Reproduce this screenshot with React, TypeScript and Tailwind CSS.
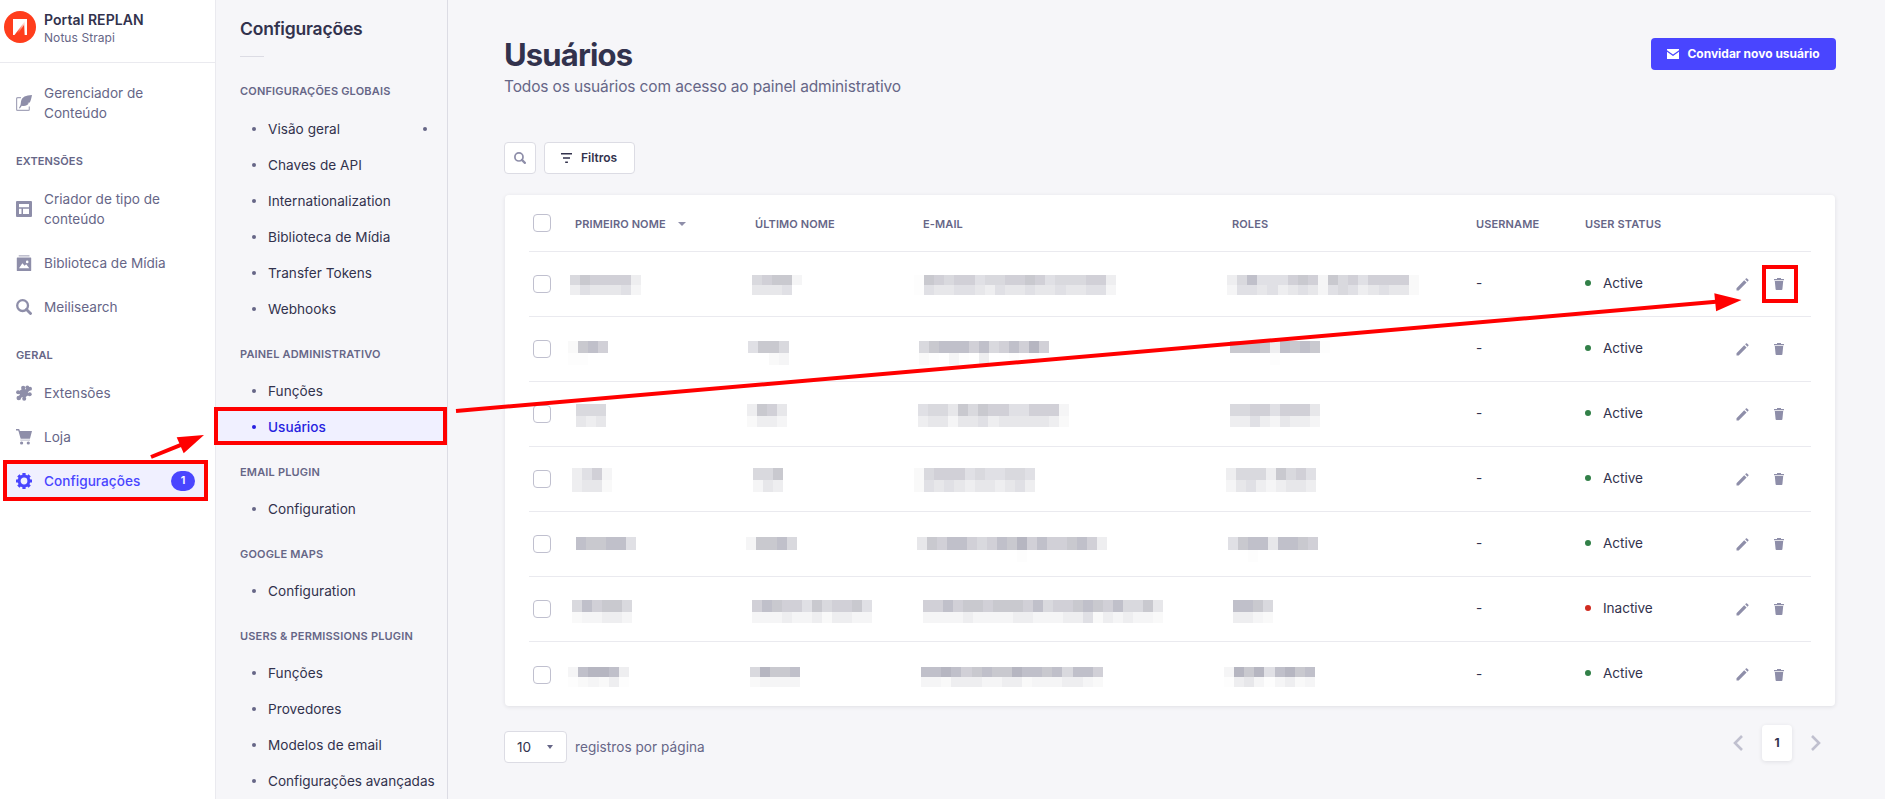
import React from 'react';

const SHADES: Record<string, string> = {
  a: '#b6b6c1', b: '#c0c0ca', c: '#c9c9cf', d: '#d1d0d7', e: '#d9d9de', f: '#e0e0e5',
  g: '#e7e7ea', h: '#eeeef0', i: '#f5f5f6', j: '#f9f9f9', k: '#fdfdfd',
};

type MosaicSpec = { x: number; w: number; y: number; heights: number[]; rows: string[] };

function Mosaic({ x, w, y, heights, rows }: MosaicSpec) {
  const tops = heights.map((_, i) => heights.slice(0, i).reduce((a, b) => a + b, 0));
  const total = heights.reduce((a, b) => a + b, 0);
  const width = Math.ceil(w * rows[0].length);
  return (
    <svg className="absolute" style={{ left: x, top: y }} width={width} height={total} shapeRendering="crispEdges">
      {rows.map((row, r) =>
        row.split('').map((ch, i) =>
          ch === '.' ? null : (
            <rect key={`${r}-${i}`} x={i * w} y={tops[r]} width={w} height={heights[r]} fill={SHADES[ch]} />
          ),
        ),
      )}
    </svg>
  );
}

type Row = { y: number; heights: number[]; cells: [number, number, string[]][]; status: string };

// Each cell: horizontal offset inside its column, block width, shade rows.
const ROWS: Row[] = [
  { y: 23, heights: [10, 10], status: 'Active', cells: [
    [-5, 10.15, ['ecddddh', 'hfgggfi']],
    [-3, 10, ['edcci', 'gggf.']],
    [-9, 10.1, ['kcdeddfeeddcdfeeeddh', 'kfggffghfggfggfggffi']],
    [-5, 10.1, ['hebfffdcdicedfddddj', 'iffgfhgfgifefhgfggj']] ] },
  { y: 24, heights: [12, 12], status: 'Active', cells: [
    [-7, 10, ['jcbd', 'kk..']],
    [-7, 10.25, ['fcce', '..ji']],
    [-4, 10, ['ecbbbdbedbdad', 'jk.ik.h..k.k.']],
    [-2, 10, ['ccbchbcbck', '....k.....']] ] },
  { y: 22, heights: [12, 11], status: 'Active', cells: [
    [1, 10, ['eee', 'ghg']],
    [-8, 10, ['hcdg', 'jhhi']],
    [-5, 10.07, ['feegcecddffdddi', 'hggiggfhggggghj']],
    [-2, 10, ['eeddfdddg', 'hhfhighhi']] ] },
  { y: 21, heights: [12, 12], status: 'Active', cells: [
    [-3, 10, ['hfdi', 'hggj']],
    [-2, 10, ['eec', 'igh']],
    [-9, 10.1, ['jedddfeffeef', 'jfgfghgghgfh']],
    [-6, 10, ['heeehcedf', 'igfhihggh']] ] },
  { y: 25, heights: [13, 12], status: 'Active', cells: [
    [1, 10, ['bccbbf', '......']],
    [-9, 10.2, ['iccbe', '.....']],
    [-6, 10, ['gcdbbdedbcadbddcbdh', '..........k........']],
    [-4, 10, ['fcbbgbbcd', '..k......']] ] },
  { y: 23, heights: [12, 11], status: 'Inactive', cells: [
    [-3, 10, ['ebdcce', 'jiihhi']],
    [-3, 10, ['dbcddfceddcf', 'iiihiihjhhii']],
    [0, 10, ['ddbdccdcccdbeddcbcdbeecg', 'iiiihiiiihhiiihhfjhihiij']],
    [1, 10, ['bbce', 'hhij']] ] },
  { y: 25, heights: [10, 10], status: 'Active', cells: [
    [-7, 10.17, ['ibaabh', 'kjijhk']],
    [-5, 10, ['eaccb', 'jiiii']],
    [-2, 10.1, ['bbabdcbccabbcbebbd', 'iijhhhiihhjiiihhij']],
    [-8, 10.12, ['iacafbacb', 'khgikihji']] ] },
];

const ContentIcon = () => (
  <svg width="16" height="16" viewBox="0 0 16 16" fill="none">
    <path d="M5 2.700H1.600a1 1 0 0 0-1 1v10.700a1 1 0 0 0 1 1h10.700a1 1 0 0 0 1-1v-3" stroke="#a5a5ba" strokeWidth="1.200" />
    <path d="M16 0C10 .300 5.800 1.600 5 6.600c-.2 1.500-.3 2.600-.5 3.400L3 13l.8.5 2-2.800c3 .5 5.500 0 7-2.200l-1.400-.4 2.400-.5c1-2 1.600-4.500 2.200-7.600Z" fill="#8e8ea9" />
  </svg>
);
const LayoutIcon = () => (
  <svg width="16" height="16" viewBox="0 0 16 16">
    <path fillRule="evenodd" d="M1 0h14a1 1 0 0 1 1 1v14a1 1 0 0 1-1 1H1a1 1 0 0 1-1-1V1a1 1 0 0 1 1-1Zm2 3v3.200h10V3H3Zm0 4.800V13h2.500V7.800H3Zm4 0V13h6V7.800H7Z" fill="#8e8ea9" />
  </svg>
);
const MediaIcon = () => (
  <svg width="16" height="16" viewBox="0 0 16 16">
    <path d="M2.700 0h10.800v1.600H2.700z" fill="#c0c0cf" />
    <path fillRule="evenodd" d="M1.400 2.400h13.200c.3 0 .6.300.6.600v12.400c0 .3-.3.600-.6.600H1.400a.6.600 0 0 1-.6-.6V3c0-.3.3-.6.6-.6ZM3 13.200h10.300L10.200 9.200l-1.600 1.600-2.200-2.600L3 13.200ZM11.200 5.600a1.300 1.300 0 1 0 0 2.600 1.300 1.300 0 0 0 0-2.600Z" fill="#8e8ea9" />
  </svg>
);
const SearchIcon = ({ size = 16 }: { size?: number }) => (
  <svg width={size} height={size} viewBox="0 0 16 16" fill="none" stroke="#8e8ea9">
    <circle cx="6.600" cy="6.600" r="5.400" strokeWidth="2.300" />
    <path d="m10.500 10.500 4 4" strokeWidth="2.900" strokeLinecap="round" />
  </svg>
);
const PuzzleIcon = () => (
  <svg width="16" height="16" viewBox="0 0 16 16" fill="#8e8ea9">
    <path d="M4 5.500 7 4l2.500 1 2-3 3.500 2.500L11.500 7.500l2.500 2-4 2-1.500 3L6.500 12 4 13.500 2 12l2-2.500-2-2Z" />
    <circle cx="7.200" cy="2.900" r="2.100" />
    <circle cx="11.300" cy="2.300" r="1.900" />
    <circle cx="14.100" cy="3.700" r="1.900" />
    <circle cx="13.700" cy="9.200" r="2" />
    <circle cx="2.100" cy="7.200" r="2" />
    <circle cx="2.800" cy="13" r="2.300" />
    <circle cx="8.200" cy="13.800" r="2" />
    <circle cx="7.800" cy="8" r="4" />
  </svg>
);
const CartIcon = () => (
  <svg width="16" height="16" viewBox="0 0 16 16" fill="#8e8ea9">
    <path d="M0 0h2.700c.4 0 .7.300.8.700L3.900 2H16l-1.900 7.200c-.1.400-.4.600-.8.600H5.300c-.4 0-.7-.3-.8-.6L2.300 1.400H0Z" />
    <path d="M4.300 10.600h9.700v1H4.300z" opacity=".6" />
    <circle cx="5.600" cy="14" r="1.600" />
    <circle cx="12.300" cy="14" r="1.600" />
  </svg>
);
const GearIcon = () => (
  <svg width="16" height="16" viewBox="0 0 16 16" fill="none" stroke="#4945ff">
    <circle cx="8" cy="8" r="4.900" strokeWidth="3" />
    <g strokeWidth="3.200">
      {[0, 45, 90, 135].map((a) => (
        <path key={a} d="M8 0v2.500M8 13.500V16" transform={`rotate(${a} 8 8)`} />
      ))}
    </g>
  </svg>
);

const LABEL = 'text-[11px] font-semibold uppercase leading-4 text-[#666687]';

function NavItem({ icon, children, tall }: { icon: React.ReactNode; children: React.ReactNode; tall?: boolean }) {
  return (
    <a className={`flex items-center gap-3 pl-4 text-[#666687] ${tall ? 'h-16' : 'h-11'}`}>
      <span className="flex w-4 shrink-0 justify-center">{icon}</span>
      <span className="w-[130px] text-[13.6px] leading-5">{children}</span>
    </a>
  );
}

function NavLabel({ children }: { children: string }) {
  return <div className={`flex h-[42px] items-center pl-4 pt-[9px] tracking-[0.12px] ${LABEL}`}>{children}</div>;
}

const SECTIONS: { title: string; items: string[] }[] = [
  { title: 'Configurações globais', items: ['Visão geral', 'Chaves de API', 'Internationalization', 'Biblioteca de Mídia', 'Transfer Tokens', 'Webhooks'] },
  { title: 'Painel administrativo', items: ['Funções', 'Usuários'] },
  { title: 'Email plugin', items: ['Configuration'] },
  { title: 'Google Maps', items: ['Configuration'] },
  { title: 'Users & Permissions plugin', items: ['Funções', 'Provedores', 'Modelos de email', 'Configurações avançadas'] },
];

function SubNav() {
  return (
    <aside className="h-full w-[232px] shrink-0 border-r border-[#dcdce4]">
      <div className="pl-6 pt-4">
        <h2 className="text-[17.5px] font-semibold leading-[26px] tracking-[-0.2px]">Configurações</h2>
        <div className="mt-[14px] h-px w-6 bg-[#dcdce4]" />
      </div>
      <div className="-mt-px">
        {SECTIONS.map((s, si) => (
          <section key={s.title}>
            <h3 className={`flex items-center pl-6 ${si === 0 ? 'h-[55px] pt-[15px]' : 'h-[46px] pt-[7px]'} tracking-[0.18px] ${LABEL}`}>{s.title}</h3>
            {s.items.map((item) => {
              const active = item === 'Usuários';
              const long = item === 'Configurações avançadas';
              return (
                <a key={item} className={`flex h-9 items-center pl-9 ${active ? 'relative bg-[#f0f0ff] text-[#271fe0]' : ''}`}>
                  <span className={`size-1 shrink-0 rounded-full ${active ? 'bg-[#271fe0]' : 'bg-[#666687]'}`} />
                  <span className={`ml-3 whitespace-nowrap text-[13.6px] leading-5 ${active ? 'font-medium' : ''} ${long ? 'tracking-[-0.05px]' : 'tracking-[0.03px]'}`}>{item}</span>
                  {item === 'Visão geral' && <span className="ml-auto mr-5 size-1 rounded-full bg-[#666687]" />}
                  {active && <span className="absolute -left-[2px] right-0 -top-[2px] h-[38px] border-4 border-[#ff0000]" />}
                </a>
              );
            })}
          </section>
        ))}
      </div>
    </aside>
  );
}

function Checkbox() {
  return <span className="ml-1 size-[18px] rounded border border-[#c0c0cf] bg-white" />;
}

const GRID = 'grid grid-cols-[46px_180px_168px_309px_244px_109px_150px_1fr] items-center';

export default function App() {
  return (
    <div className="relative flex h-[799px] w-full overflow-hidden bg-[#f6f6f9] font-['Inter',sans-serif] text-[#32324d]">
      <nav className="h-full w-[216px] shrink-0 border-r border-[#eaeaef] bg-white">
        <div className="flex h-[63px] border-b border-[#eaeaef] pl-1 pt-[11px]">
          <svg width="32" height="32" viewBox="0 0 32 32">
            <defs>
              <linearGradient id="fade" x1="0" y1="1" x2="1" y2="0">
                <stop offset="0.2" stopColor="#ff3d1c" />
                <stop offset="1" stopColor="#fff" />
              </linearGradient>
            </defs>
            <circle cx="16" cy="16" r="16" fill="#ff3d1c" />
            <path d="M9 8h14v16H9z" fill="#fff" />
            <path d="M10.500 24 21 10v14z" fill="url(#fade)" />
            <path d="M13 24 20 14v10z" fill="#ff3d1c" />
          </svg>
          <div className="ml-2 -mt-px">
            <div className="text-[14px] font-semibold leading-5 tracking-[0.06px]">Portal REPLAN</div>
            <div className="text-[12px] leading-4 tracking-[0.07px] text-[#666687]">Notus Strapi</div>
          </div>
        </div>
        <div className="pt-2">
          <NavItem tall icon={<ContentIcon />}>Gerenciador de Conteúdo</NavItem>
          <NavLabel>Extensões</NavLabel>
          <NavItem tall icon={<LayoutIcon />}>Criador de tipo de conteúdo</NavItem>
          <NavItem icon={<MediaIcon />}>Biblioteca de Mídia</NavItem>
          <NavItem icon={<SearchIcon />}>Meilisearch</NavItem>
          <NavLabel>Geral</NavLabel>
          <NavItem icon={<PuzzleIcon />}>Extensões</NavItem>
          <NavItem icon={<CartIcon />}>Loja</NavItem>
          <a className="ml-[3px] mt-px flex h-[41px] w-[205px] items-center border-4 border-[#ff0000] bg-[#f0f0ff] pl-[9px] text-[#4945ff]">
            <GearIcon />
            <span className="ml-3 pt-px text-[13.6px] font-medium leading-5 tracking-[0.04px]">Configurações</span>
            <span className="ml-auto mr-[9px] flex h-5 w-6 items-center justify-center rounded-full bg-[#4945ff] text-[11px] font-semibold text-white">1</span>
          </a>
        </div>
      </nav>

      <SubNav />

      <main className="flex flex-1 flex-col pl-14 pr-[49px]">
        <div className="flex justify-between">
          <div className="pt-[35px]">
            <h1 className="text-[31px] font-bold leading-10 tracking-[-0.85px]">Usuários</h1>
            <p className="text-[15.5px] leading-6 tracking-[-0.14px] text-[#666687]">Todos os usuários com acesso ao painel administrativo</p>
          </div>
          <button className="mt-[38px] flex h-8 w-[185px] items-center justify-center gap-2 rounded bg-[#4945ff] text-[12px] font-bold text-white">
            <svg width="12" height="10" viewBox="0 0 12 10">
              <path d="M0 0h12v1.300L6 5.600 0 1.300Z" fill="#fff" />
              <path d="M0 2.800 6 7l6-4.200V10H0Z" fill="#fff" />
            </svg>
            Convidar novo usuário
          </button>
        </div>

        <div className="mt-[43px] flex gap-2">
          <button className="flex size-8 items-center justify-center rounded border border-[#dcdce4] bg-white"><SearchIcon size={12} /></button>
          <button className="flex h-8 w-[91px] items-center rounded border border-[#dcdce4] bg-white pl-4 text-[12px] font-semibold">
            <svg width="11" height="10" viewBox="0 0 11 10" fill="#32324d"><path d="M0 0h11v1.600H0zM2 4.200h7v1.600H2zM4.200 8.400h2.700V10H4.200z" /></svg>
            <span className="ml-[9px]">Filtros</span>
          </button>
        </div>

        <div className="ml-px mr-px mt-[21px] h-[511px] rounded bg-white px-6 shadow-[0_1px_4px_rgba(33,33,52,0.1)]">
          <div className={`h-[57px] border-b border-[#eaeaef] ${GRID} text-[11px] font-semibold tracking-[0.12px] text-[#666687]`}>
            <Checkbox />
            <span className="flex items-center pt-0.5">PRIMEIRO NOME
              <svg className="ml-3" width="8" height="4" viewBox="0 0 8 4"><path d="M0 0h8L4 4z" fill="#8e8ea9" /></svg>
            </span>
            <span className="pt-0.5">ÚLTIMO NOME</span>
            <span className="pt-0.5">E-MAIL</span>
            <span className="pt-0.5">ROLES</span>
            <span className="pt-0.5">USERNAME</span>
            <span className="pt-0.5">USER STATUS</span>
          </div>
          {ROWS.map((row, i) => (
            <div key={i} className={`h-[65px] ${i < ROWS.length - 1 ? 'border-b border-[#eaeaef]' : ''} ${GRID} text-[13.6px]`}>
              <Checkbox />
              {row.cells.map(([x, w, rows], c) => (
                <div key={c} className="relative h-full"><Mosaic x={x} w={w} y={row.y} heights={row.heights} rows={rows} /></div>
              ))}
              <span className="pb-px">-</span>
              <span className="flex items-center gap-3 pb-0.5">
                <span className={`size-1.5 rounded-full ${row.status === 'Active' ? 'bg-[#328048]' : 'bg-[#d02b20]'}`} />
                <span className="tracking-[-0.05px]">{row.status}</span>
              </span>
              <span className="relative flex items-center">
                <svg className="ml-px" width="13" height="13" viewBox="0 0 13 13" fill="#8e8ea9">
                  <path d="m8.200 2.200 2.400 2.400L2.700 12.500H.5v-2.300ZM9.100 1.300l.9-.9c.3-.3.7-.3 1 0l1.400 1.400c.3.3.3.700 0 1l-.9.900Z" />
                </svg>
                <svg className="ml-[25px]" width="10" height="12" viewBox="0 0 10 12" fill="#8e8ea9">
                  <path d="M0 1h3V0h4v1h3v1.200H0ZM.800 3h8.400l-.8 8.200c0 .5-.4.800-.8.800H2.400c-.4 0-.8-.3-.8-.8Z" />
                </svg>
                {i === 0 && <span className="absolute -top-[13px] left-[27px] h-[38px] w-9 border-4 border-[#ff0000]" />}
              </span>
            </div>
          ))}
        </div>

        <div className="flex items-start justify-between pt-[19px]">
          <div className="flex items-center pt-[6px] text-[13.6px]">
            <div className="flex h-8 w-[63px] items-center rounded border border-[#dcdce4] bg-white pl-3">
              <span>10</span>
              <svg className="ml-4" width="6" height="4" viewBox="0 0 6 4"><path d="M0 0h6L3 4z" fill="#666687" /></svg>
            </div>
            <span className="ml-2 tracking-[0.04px] text-[#666687]">registros por página</span>
          </div>
          <div className="mr-[15px] flex items-center">
            <svg width="10" height="16" viewBox="0 0 10 16" fill="none" stroke="#c0c0cf" strokeWidth="2.600"><path d="M9 1 2 8l7 7" /></svg>
            <span className="mx-[19px] flex h-9 w-[30px] items-center justify-center rounded bg-white text-[12px] font-bold shadow-[0_1px_4px_rgba(33,33,52,0.1)]">1</span>
            <svg width="10" height="16" viewBox="0 0 10 16" fill="none" stroke="#c0c0cf" strokeWidth="2.600"><path d="m1 1 7 7-7 7" /></svg>
          </div>
        </div>
      </main>

      <svg className="pointer-events-none absolute left-0 top-0" width="1885" height="799" fill="#ff0000" stroke="none">
        <path d="m151 457 30-12.200" stroke="#ff0000" strokeWidth="4" />
        <path d="m204 435-27.300 2.200 7 16Z" />
        <path d="M456 411 1716 301.800" stroke="#ff0000" strokeWidth="4" />
        <path d="m1741.500 300-27.200-6.800 1.800 18Z" />
      </svg>
    </div>
  );
}
